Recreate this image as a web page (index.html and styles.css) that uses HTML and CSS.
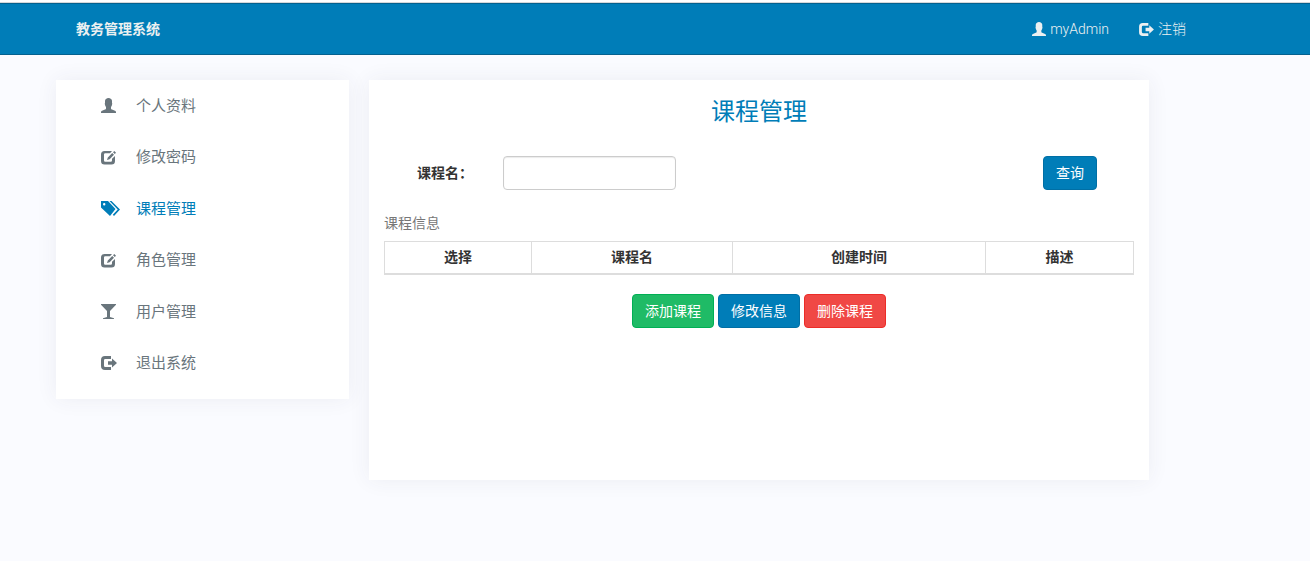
FILE: index.html
```html
<!DOCTYPE html>
<html lang="zh-CN">
<head>
<meta charset="utf-8">
<meta name="viewport" content="width=device-width, initial-scale=1">
<title>教务管理系统</title>
<link rel="stylesheet" href="styles.css">
</head>
<body>
<svg class="sprite" aria-hidden="true">
  <symbol id="user" viewBox="0 0 15 15"><path d="M5 1Q6 0 7.500 0Q9 0 10 1Q11 1.500 11 3V5Q11.500 5.200 11 7Q10.500 8.500 10 9V10.500Q10 11.300 11 11.600L14 12.800Q15 13.300 15 14.200V15H0V14.200Q0 13.300 1 12.800L4 11.600Q5 11.300 5 10.500V9Q4.500 8.500 4 7Q3.500 5.200 4 5V3Q4 1.500 5 1Z"/></symbol>
  <symbol id="edit" viewBox="0 0 15 15"><path fill-rule="evenodd" d="M3.500 1H11L9 3.300H4.200Q3 3.300 3 4.500V10.500Q3 11.700 4.200 11.700H9.800Q11 11.700 11 10.500V8.700L14 6V11Q14 14.500 10.500 14.500H3.500Q0 14.500 0 11V4.500Q0 1 3.500 1ZM11.200 3L13 4.800L8.600 9.200L6 10L6.800 7.400ZM12 2.200L13.300 1L15 2.700L13.800 4Z"/></symbol>
  <symbol id="tags" viewBox="0 0 19 15"><path fill-rule="evenodd" d="M0 0H7L14.500 8L9 15L0 6.500ZM2 3.200A1.200 1.200 0 1 0 4.400 3.200A1.200 1.200 0 1 0 2 3.200ZM8.500 0H10.500L19 8.500L13 15L11.800 13.800L16.700 8.600Z"/></symbol>
  <symbol id="glass" viewBox="0 0 15 15"><path d="M0 0H15V.8L9 7V13L13 14.200V15H2V14.200L6 13V7L0 .8Z"/></symbol>
  <symbol id="logout" viewBox="0 0 16 14"><path d="M10 0H4Q0 0 0 4V10Q0 14 4 14H10V11H4.200Q3 11 3 9.800V4.200Q3 3 4.200 3H10ZM7 5.200H11V2.500L16 7L11 11.500V8.800H7Z"/></symbol>
</svg>

<header class="navbar">
  <div class="navbar-inner">
    <a class="brand" href="#">教务管理系统</a>
    <nav class="account">
      <a class="account-link" href="#"><svg class="nav-icon"><use href="#user"/></svg>myAdmin</a>
      <a class="account-link" href="#"><svg class="nav-icon nav-icon-exit"><use href="#logout"/></svg>注销</a>
    </nav>
  </div>
</header>

<div class="page">
  <aside class="sidebar">
    <ul class="menu">
      <li class="menu-item"><a class="menu-link" href="#"><span class="menu-icon"><svg class="icon"><use href="#user"/></svg></span>个人资料</a></li>
      <li class="menu-item"><a class="menu-link" href="#"><span class="menu-icon"><svg class="icon"><use href="#edit"/></svg></span>修改密码</a></li>
      <li class="menu-item"><a class="menu-link active" href="#"><span class="menu-icon"><svg class="icon icon-wide"><use href="#tags"/></svg></span>课程管理</a></li>
      <li class="menu-item"><a class="menu-link" href="#"><span class="menu-icon"><svg class="icon"><use href="#edit"/></svg></span>角色管理</a></li>
      <li class="menu-item"><a class="menu-link" href="#"><span class="menu-icon"><svg class="icon"><use href="#glass"/></svg></span>用户管理</a></li>
      <li class="menu-item"><a class="menu-link" href="#"><span class="menu-icon"><svg class="icon icon-exit"><use href="#logout"/></svg></span>退出系统</a></li>
    </ul>
  </aside>

  <main class="panel">
    <h1 class="title">课程管理</h1>
    <form class="search">
      <label class="search-label" for="course">课程名：</label>
      <input class="search-input" id="course" type="text">
      <button class="btn btn-primary search-btn" type="button">查询</button>
    </form>
    <table class="table">
      <caption class="caption">课程信息</caption>
      <colgroup><col class="col-select"><col class="col-name"><col class="col-time"><col class="col-desc"></colgroup>
      <thead><tr><th>选择</th><th>课程名</th><th>创建时间</th><th>描述</th></tr></thead>
    </table>
    <div class="actions">
      <button class="btn btn-success" type="button">添加课程</button>
      <button class="btn btn-primary" type="button">修改信息</button>
      <button class="btn btn-danger" type="button">删除课程</button>
    </div>
  </main>
</div>
</body>
</html>
```
FILE: styles.css
```css
* { box-sizing: border-box; }

body {
  margin: 0;
  padding-top: 2px;
  min-height: 100vh;
  background: linear-gradient(#fff 2px, #fafbff 2px);
  color: #333;
  font: 14px/20px "Liberation Sans", "Noto Sans CJK SC", sans-serif;
}

a { color: inherit; text-decoration: none; }

.sprite { position: absolute; width: 0; height: 0; }

.navbar {
  border-top: 1px solid #d5d8da;
  background: #007db8;
  color: #ecf0f1;
}

.navbar-inner {
  display: flex;
  justify-content: space-between;
  align-items: center;
  height: 52px;
  padding: 0 124px 0 76px;
  border: solid #04618f;
  border-width: 1px 0;
}

.brand { font-weight: 700; }

.account {
  display: flex;
  gap: 30px;
  font-family: Roboto, "Noto Sans CJK SC", sans-serif;
  font-weight: 300;
}

.account-link { display: flex; align-items: center; gap: 4px; }

.nav-icon { width: 14px; height: 14px; fill: currentColor; }
.nav-icon-exit { width: 15px; height: 13px; }

.page {
  display: grid;
  grid-template-columns: minmax(0, 293px) minmax(0, 780px);
  align-items: start;
  gap: 20px;
  padding: 25px 56px;
}

.sidebar,
.panel {
  background: #fff;
  box-shadow: 0 0 20px rgba(60, 60, 90, 0.07);
}

.sidebar { padding-bottom: 10px; }

.menu {
  display: grid;
  grid-auto-rows: 1fr;
  height: 309px;
  margin: 0;
  padding: 0;
  list-style: none;
}

.menu-link {
  display: flex;
  align-items: center;
  height: 100%;
  padding-left: 45px;
  color: #69757c;
  font-size: 15px;
  font-weight: 400;
}

.menu-link.active { color: #007db8; }

.menu-icon { display: flex; width: 35px; }

.icon { width: 15px; height: 15px; fill: currentColor; }
.icon-wide { width: 19px; }
.icon-exit { width: 16px; height: 14px; }

.panel { min-height: 400px; padding: 16px 15px; }

.title {
  margin: 0;
  color: #007db8;
  font-size: 24px;
  font-weight: 400;
  line-height: 32px;
  text-align: center;
}

.search {
  display: flex;
  align-items: center;
  margin: 28px 37px 23px 33px;
}

.search-label { width: 86px; font-weight: 700; }

.search-input {
  width: 173px;
  height: 34px;
  padding: 6px 12px;
  border: 1px solid #ccc;
  border-radius: 4px;
  box-shadow: inset 0 1px 1px rgba(0, 0, 0, 0.08);
  font: inherit;
}

.search-btn { margin-left: auto; }

.btn {
  height: 34px;
  padding: 0 12px;
  border: 1px solid;
  border-radius: 4px;
  color: #fff;
  font: inherit;
  font-weight: 400;
}

.btn-primary { border-color: #006fa5; background: #007db8; }
.btn-success { border-color: #00af54; background: #1fbb66; }
.btn-danger { border-color: #ec2c28; background: #f04845; }

.table { width: 100%; border-collapse: collapse; table-layout: fixed; }

.caption {
  padding-bottom: 8px;
  color: #777;
  font-weight: 400;
  text-align: left;
}

.table th {
  height: 32px;
  padding: 5px;
  border: 1px solid #ddd;
  border-bottom-width: 2px;
}

.col-select { width: 147px; }
.col-name { width: 201px; }
.col-time { width: 253px; }

.actions {
  display: flex;
  justify-content: center;
  gap: 4px;
  margin-top: 19px;
}
```
